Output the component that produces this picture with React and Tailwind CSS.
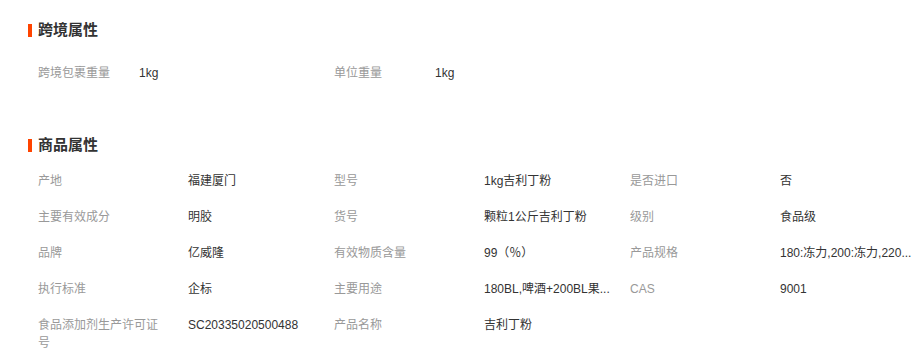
const font = "font-['Liberation_Sans','Noto_Sans_CJK_SC',sans-serif]"

const crossBorder = [
  { label: '跨境包裹重量', value: '1kg' },
  { label: '单位重量', value: '1kg' }
]

const productAttrs = [
  [
    { label: '产地', value: '福建厦门' },
    { label: '型号', value: '1kg吉利丁粉' },
    { label: '是否进口', value: '否' }
  ],
  [
    { label: '主要有效成分', value: '明胶' },
    { label: '货号', value: '颗粒1公斤吉利丁粉' },
    { label: '级别', value: '食品级' }
  ],
  [
    { label: '品牌', value: '亿威隆' },
    { label: '有效物质含量', value: '99（％）' },
    { label: '产品规格', value: '180:冻力,200:冻力,220...' }
  ],
  [
    { label: '执行标准', value: '企标' },
    { label: '主要用途', value: '180BL,啤酒+200BL果...' },
    { label: 'CAS', value: '9001' }
  ],
  [
    { label: '食品添加剂生产许可证号', value: 'SC20335020500488' },
    { label: '产品名称', value: '吉利丁粉' }
  ]
]

function SectionTitle({ title }) {
  return (
    <div className="flex items-center h-5 pl-[28px]">
      <span className="w-[4px] h-[13px] bg-[#ff4400]" />
      <h3 className="ml-[6px] text-[15px] font-bold text-[#333] leading-5">{title}</h3>
    </div>
  )
}

export default function App() {
  return (
    <div className={`w-[924px] h-[351px] bg-white overflow-hidden pt-5 text-xs leading-[18px] ${font}`}>
      {/* 跨境属性 */}
      <SectionTitle title="跨境属性" />
      <div className="mt-[24px] pl-[38px] flex">
        {crossBorder.map((item) => (
          <div key={item.label} className="flex">
            <div className="w-[101px] text-[#999]">{item.label}</div>
            <div className="w-[195px] text-[#333]">{item.value}</div>
          </div>
        ))}
      </div>

      {/* 商品属性 */}
      <div className="mt-[53px]">
        <SectionTitle title="商品属性" />
      </div>
      <div className="mt-[8px] pl-[38px]">
        {productAttrs.map((row, i) => (
          <div key={i} className="flex py-[9px]">
            {row.map((item) => (
              <div key={item.label} className="flex">
                <div className="w-[150px] pr-[24px] text-[#999]">{item.label}</div>
                <div className="w-[146px] pr-[16px] text-[#333] whitespace-nowrap">{item.value}</div>
              </div>
            ))}
          </div>
        ))}
      </div>
    </div>
  )
}
